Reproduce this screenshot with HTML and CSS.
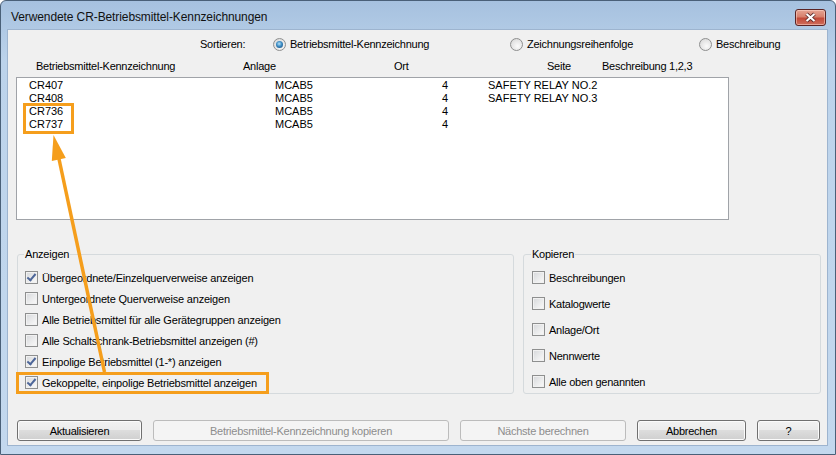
FILE: index.html
```html
<!DOCTYPE html>
<html>
<head>
  <link rel="stylesheet" href="styles.css">
</head>
<body>
  <div class="screen">
    <div class="window">
      <div class="titlebar">
        <span class="title">Verwendete CR-Betriebsmittel-Kennzeichnungen</span>
        <button class="close-btn">
          <svg viewBox="0 0 30 17">
            <path d="M10.5 4.5l9 8M19.5 4.5l-9 8" class="x-outline"/>
            <path d="M10.5 4.5l9 8M19.5 4.5l-9 8" class="x-fill"/>
          </svg>
        </button>
      </div>

      <div class="client">
        <!-- sort options -->
        <div class="sort-row">
          <span>Sortieren:</span>
          <label class="radio"><span class="radio-dot checked"></span>Betriebsmittel-Kennzeichnung</label>
          <label class="radio"><span class="radio-dot"></span>Zeichnungsreihenfolge</label>
          <label class="radio"><span class="radio-dot"></span>Beschreibung</label>
        </div>

        <div class="col-headers">
          <span>Betriebsmittel-Kennzeichnung</span>
          <span>Anlage</span>
          <span>Ort</span>
          <span>Seite</span>
          <span>Beschreibung 1,2,3</span>
        </div>

        <div class="listbox">
          <div class="list-row"><span>CR407</span><span>MCAB5</span><span>4</span><span>SAFETY RELAY NO.2</span></div>
          <div class="list-row"><span>CR408</span><span>MCAB5</span><span>4</span><span>SAFETY RELAY NO.3</span></div>
          <div class="list-row"><span>CR736</span><span>MCAB5</span><span>4</span><span></span></div>
          <div class="list-row"><span>CR737</span><span>MCAB5</span><span>4</span><span></span></div>
        </div>

        <div class="groups">
          <fieldset class="group group-show">
            <legend>Anzeigen</legend>
            <label class="check"><span class="check-box checked"></span>Übergeordnete/Einzelquerverweise anzeigen</label>
            <label class="check"><span class="check-box"></span>Untergeordnete Querverweise anzeigen</label>
            <label class="check"><span class="check-box"></span>Alle Betriebsmittel für alle Gerätegruppen anzeigen</label>
            <label class="check"><span class="check-box"></span>Alle Schaltschrank-Betriebsmittel anzeigen (#)</label>
            <label class="check"><span class="check-box checked"></span>Einpolige Betriebsmittel (1-*) anzeigen</label>
            <label class="check"><span class="check-box checked"></span>Gekoppelte, einpolige Betriebsmittel anzeigen</label>
          </fieldset>
          <fieldset class="group group-copy">
            <legend>Kopieren</legend>
            <label class="check"><span class="check-box"></span>Beschreibungen</label>
            <label class="check"><span class="check-box"></span>Katalogwerte</label>
            <label class="check"><span class="check-box"></span>Anlage/Ort</label>
            <label class="check"><span class="check-box"></span>Nennwerte</label>
            <label class="check"><span class="check-box"></span>Alle oben genannten</label>
          </fieldset>
        </div>

        <div class="button-row">
          <button class="btn btn-refresh">Aktualisieren</button>
          <button class="btn btn-copy" disabled>Betriebsmittel-Kennzeichnung kopieren</button>
          <button class="btn btn-next" disabled>Nächste berechnen</button>
          <button class="btn btn-cancel">Abbrechen</button>
          <button class="btn btn-help">?</button>
        </div>
      </div>
    </div>

    <!-- orange annotation over the dialog -->
    <svg class="callouts" viewBox="0 0 836 455">
      <rect x="24.5" y="104.5" width="48" height="28"/>
      <rect x="17.5" y="373.5" width="250" height="19"/>
      <line x1="58.8" y1="158" x2="104.5" y2="372"/>
      <polygon points="53.5,135 65.8,158 51.8,161"/>
    </svg>
  </div>
</body>
</html>
```

FILE: styles.css
```css
body {
  margin: 0;
  background: #fff;
  font-family: "Liberation Sans", Arial, sans-serif;
  font-size: 11px;
  color: #000;
}

.screen {
  position: relative;
  width: 836px;
  height: 455px;
}

.window {
  width: 836px;
  height: 455px;
  box-sizing: border-box;
  border: 1px solid #4a6078;
  border-radius: 6px 6px 0 0;
  background: linear-gradient(#a6c1df, #bcd3eb 60px, #c3d8ee);
  display: flex;
  flex-direction: column;
}

.titlebar {
  height: 29px;
  display: flex;
  align-items: center;
  padding: 0 9px 0 10px;
}

.title {
  font-size: 12px;
  padding-top: 3px;
  color: #111;
  letter-spacing: -0.1px;
}

.close-btn {
  margin-left: auto;
  margin-top: 4px;
  width: 31px;
  height: 17px;
  padding: 0;
  border: 1px solid #5b2424;
  border-radius: 3px;
  background: linear-gradient(#e6a493, #d7806d 45%, #c24a39 55%, #cf6e5c);
  box-shadow: inset 0 0 0 1px rgba(255, 220, 210, 0.5);
}

.close-btn svg {
  display: block;
  width: 29px;
  height: 15px;
}

.x-outline {
  fill: none;
  stroke: #5a2a2a;
  stroke-width: 4.2;
}

.x-fill {
  fill: none;
  stroke: #fff;
  stroke-width: 2.4;
}

.client {
  flex: 1;
  margin: 0 8px 9px 7px;
  background: #f0f0f0;
  box-shadow: 0 0 0 1px #9db4cf;
  padding-top: 6px;
  display: flex;
  flex-direction: column;
  letter-spacing: -0.25px;
}

/* sort row */
.sort-row {
  display: grid;
  grid-template-columns: 73px 237px 189px 1fr;
  padding-left: 192px;
  height: 16px;
  align-items: center;
}

.radio {
  display: flex;
  align-items: center;
  gap: 4px;
}

.radio-dot {
  width: 11px;
  height: 11px;
  border-radius: 50%;
  border: 1px solid #8e8f8f;
  background: radial-gradient(circle at 60% 65%, #fbfbfb 0, #e4e4e4 60%, #cfcfcf 100%);
  display: flex;
  align-items: center;
  justify-content: center;
}

.radio-dot.checked::after {
  content: "";
  width: 7px;
  height: 7px;
  border-radius: 50%;
  background: radial-gradient(circle at 45% 40%, #b8e4fa 0, #3c8cc4 45%, #123f6c 100%);
}

/* column headers */
.col-headers {
  display: grid;
  grid-template-columns: 207px 151px 153px 55px 1fr;
  padding-left: 28px;
  margin-top: 7px;
  height: 14px;
  align-items: center;
}

.listbox {
  margin: 4px 0 0 8px;
  width: 713px;
  height: 143px;
  box-sizing: border-box;
  border: 1px solid #a0a3a8;
  background: #fff;
  padding-top: 1px;
  letter-spacing: 0;
}

.list-row {
  display: grid;
  grid-template-columns: 246px 167px 46px 1fr;
  padding-left: 12px;
  height: 13px;
  line-height: 13px;
}

/* group boxes */
.groups {
  display: flex;
  gap: 9px;
  margin: 27px 0 0 9px;
}

.group {
  margin: 0;
  border: 1px solid #d5dadd;
  border-radius: 3px;
  padding: 6px 0 0 7px;
  display: flex;
  flex-direction: column;
}

.group legend {
  padding: 0 1px;
  margin-left: -1px;
  line-height: 14px;
}

.group-show {
  width: 497px;
  box-sizing: border-box;
  letter-spacing: -0.2px;
}

.group-copy {
  width: 298px;
  box-sizing: border-box;
  padding-left: 8px;
  gap: 5px;
}

.check {
  display: flex;
  align-items: center;
  gap: 4px;
  height: 21px;
}

.check-box {
  width: 11px;
  height: 11px;
  border: 1px solid #8e8f8f;
  background: linear-gradient(135deg, #d6d8db, #f4f4f4 80%);
  box-shadow: inset 0 0 0 1px #f1f1f1;
  position: relative;
}

.check-box.checked::after {
  content: "";
  position: absolute;
  left: 3px;
  top: 0;
  width: 3px;
  height: 7px;
  border: solid #4d6699;
  border-width: 0 2px 2px 0;
  transform: rotate(40deg);
}

/* buttons */
.button-row {
  display: flex;
  gap: 11px;
  margin: 26px 0 0 9px;
}

.btn {
  height: 21px;
  padding: 0;
  font-family: "Liberation Sans", Arial, sans-serif;
  font-size: 11px;
  letter-spacing: -0.25px;
  color: #000;
  border: 1px solid #707070;
  border-radius: 3px;
  background: linear-gradient(#f2f2f2, #ebebeb 50%, #dddddd 50%, #cfcfcf);
  box-shadow: inset 0 0 0 1px #fbfbfb;
}

.btn:disabled {
  color: #8d8d8d;
  border-color: #bcbcbc;
  background: #f4f4f4;
  box-shadow: none;
}

.btn-refresh { width: 125px; }
.btn-copy { width: 296px; }
.btn-next { width: 166px; }
.btn-cancel { width: 109px; }
.btn-help { width: 63px; }

/* annotation */
.callouts {
  position: absolute;
  top: 0;
  left: 0;
  width: 836px;
  height: 455px;
  pointer-events: none;
}

.callouts rect {
  fill: none;
  stroke: #f59e1c;
  stroke-width: 3;
}

.callouts line {
  stroke: #f59e1c;
  stroke-width: 3.5;
}

.callouts polygon {
  fill: #f59e1c;
}
```
